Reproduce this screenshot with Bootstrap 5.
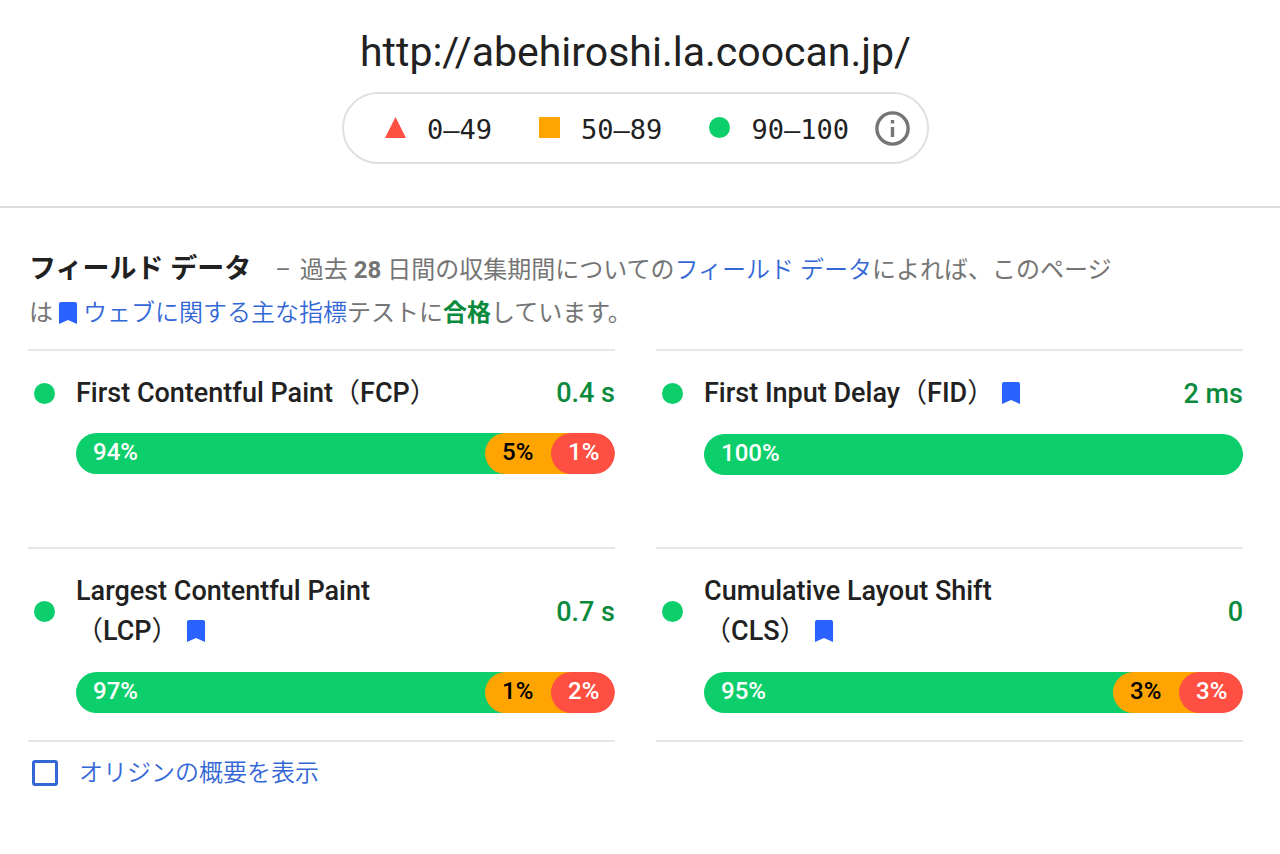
<!DOCTYPE html>
<html lang="ja">
<head>
<meta charset="utf-8">
<meta name="viewport" content="width=device-width, initial-scale=1">
<title>フィールド データ</title>
<link rel="stylesheet" href="https://cdn.jsdelivr.net/npm/bootstrap@5.3.0/dist/css/bootstrap.min.css">
<style>
  :root { --pass: #0cce6b; --average: #ffa400; --fail: #ff4e42; --line: #e6e6e6; --accent: #2962ff; }
  body { font-family: Roboto, "Noto Sans CJK JP", sans-serif; color: #212121; font-size: 24px; background: #fff; }
  .page-pad { padding-left: 28px; padding-right: 37px; }
  .report-head { padding-top: 22px; padding-bottom: 42px; border-bottom: 2px solid #dcdcdc; }
  .report-url { font-size: 41px; line-height: 60px; font-weight: 400; margin-bottom: 10px; }
  .legend-pill { border: 2px solid #e0e0e0; min-height: 72px; padding: 0 17px 0 41px; gap: 47px; font: 27px/40px "DejaVu Sans Mono", monospace; }
  .legend-item { gap: 21px; padding-top: 3px; }
  .legend-item svg { margin-bottom: 5px; }
  .info-btn { width: 35px; height: 35px; margin-left: -21px; }
  .summary { line-height: 43px; padding: 40px 120px 14px 1px; color: #757575; }
  .summary h2 { font-size: 27px; line-height: 43px; color: #212121; margin-right: 18px; }
  .summary a, .origin-label { color: #3367d6; font-weight: 350; }
  .dash { margin-right: 3px; }
  .pass-text { color: #0a8a3c; }
  .metric-grid { column-gap: 41px; display: grid; grid-template-columns: repeat(2, minmax(0, 1fr)); }
  .metric { border-top: 2px solid var(--line); padding: 22px 0 27px; min-height: 198px; }
  .metric-last { border-bottom: 2px solid var(--line); min-height: 195px; }
  .metric-head { padding-left: 6px; margin-bottom: 20px; }
  .dot { width: 21px; height: 21px; border-radius: 50%; background: var(--pass); margin-right: 21px; }
  .metric h3 { font-size: 27px; line-height: 40px; font-weight: 500; max-width: 370px; }
  .metric h3 span { font-weight: 400; }
  .metric-value { font-size: 27px; line-height: 40px; font-weight: 500; color: #0a8a3c; }
  .mark-icon { width: 18px; height: 22px; margin: 0 0 10px 8px; vertical-align: -12px; fill: var(--accent); }
  .inline-icon { width: 18px; height: 22px; margin-right: 6px; vertical-align: -3px; fill: var(--accent); }
  .dist { margin-left: 48px; height: 41px; border-radius: 21px; overflow: hidden; font-weight: 500; line-height: 39px; }
  .seg { padding-left: 17px; }
  .seg-good { background: var(--pass); color: #fff; }
  .seg-mid { background: var(--average); color: #000; width: 86px; margin-left: -20px; border-radius: 21px 0 0 21px; }
  .seg-bad { background: var(--fail); color: #fff; width: 64px; margin-left: -20px; border-radius: 21px; }
  .origin-row { padding: 11px 0 48px 4px; gap: 21px; }
  .origin-row .form-check-input { width: 26px; height: 26px; border: 3px solid #3367d6; border-radius: 3px; }
  .origin-label { line-height: 40px; }
  @media (max-width: 900px) { .metric-grid { grid-template-columns: 1fr; } .legend-pill { flex-wrap: wrap; } }
</style>
</head>
<body>
<svg class="d-none" aria-hidden="true"><symbol id="bookmark" viewBox="0 0 18 22"><path d="M2 0H16Q18 0 18 2V22L9 18L0 22V2Q0 0 2 0Z"/></symbol></svg>

<header class="report-head page-pad d-flex flex-column align-items-center">
  <h1 class="report-url text-break">http://abehiroshi.la.coocan.jp/</h1>
  <div class="legend-pill rounded-pill d-flex align-items-center">
    <span class="legend-item d-flex align-items-center"><svg width="21" height="21"><path d="M10.500 0L21 21H0Z" fill="#ff4e42"/></svg>0–49</span>
    <span class="legend-item d-flex align-items-center"><svg width="21" height="21"><path d="M0 0H21V21H0Z" fill="#ffa400"/></svg>50–89</span>
    <span class="legend-item d-flex align-items-center"><svg width="21" height="21"><circle cx="10.500" cy="10.500" r="10.500" fill="#0cce6b"/></svg>90–100</span>
    <button type="button" class="info-btn btn p-0 border-0 d-flex" aria-label="情報"><svg width="35" height="35" viewBox="0 0 35 35"><circle cx="17.500" cy="17.500" r="15.600" fill="none" stroke="#757575" stroke-width="3.400"/><path d="M15.800 16H19.200V26H15.800ZM15.800 9H19.200V12.400H15.800Z" fill="#757575"/></svg></button>
  </div>
</header>

<main class="page-pad">
  <div class="summary">
    <h2 class="d-inline fw-bold">フィールド データ</h2>
    <span class="dash">–</span> 過去 <b>28</b> 日間の収集期間についての<a class="text-decoration-none" href="#field">フィールド データ</a>によれば、このページ<wbr><span>は</span> <svg class="inline-icon"><use href="#bookmark"/></svg><a class="text-decoration-none" href="#vitals">ウェブに関する主な指標</a>テストに<b class="pass-text">合格</b>しています。
  </div>

  <div class="metric-grid">
    <section class="metric">
      <div class="metric-head d-flex align-items-center"><span class="dot flex-shrink-0"></span><h3 class="mb-0">First Contentful Paint<span>（</span>FCP<span>）</span></h3><span class="metric-value ms-auto">0.4 s</span></div>
      <div class="dist d-flex"><div class="seg seg-good flex-grow-1">94%</div><div class="seg seg-mid">5%</div><div class="seg seg-bad">1%</div></div>
    </section>
    <section class="metric">
      <div class="metric-head d-flex align-items-center"><span class="dot flex-shrink-0"></span><h3 class="mb-0">First Input Delay<span>（</span>FID<span>）</span><svg class="mark-icon"><use href="#bookmark"/></svg></h3><span class="metric-value ms-auto">2 ms</span></div>
      <div class="dist d-flex"><div class="seg seg-good flex-grow-1">100%</div></div>
    </section>
    <section class="metric metric-last">
      <div class="metric-head d-flex align-items-center"><span class="dot flex-shrink-0"></span><h3 class="mb-0">Largest Contentful Paint <span>（</span>LCP<span>）</span><svg class="mark-icon"><use href="#bookmark"/></svg></h3><span class="metric-value ms-auto">0.7 s</span></div>
      <div class="dist d-flex"><div class="seg seg-good flex-grow-1">97%</div><div class="seg seg-mid">1%</div><div class="seg seg-bad">2%</div></div>
    </section>
    <section class="metric metric-last">
      <div class="metric-head d-flex align-items-center"><span class="dot flex-shrink-0"></span><h3 class="mb-0">Cumulative Layout Shift <span>（</span>CLS<span>）</span><svg class="mark-icon"><use href="#bookmark"/></svg></h3><span class="metric-value ms-auto">0</span></div>
      <div class="dist d-flex"><div class="seg seg-good flex-grow-1">95%</div><div class="seg seg-mid">3%</div><div class="seg seg-bad">3%</div></div>
    </section>
  </div>

  <div class="origin-row d-flex align-items-center">
    <input class="form-check-input m-0" type="checkbox" id="origin">
    <label class="origin-label" for="origin">オリジンの概要を表示</label>
  </div>
</main>
<script src="https://cdn.jsdelivr.net/npm/bootstrap@5.3.0/dist/js/bootstrap.bundle.min.js"></script>
</body>
</html>
